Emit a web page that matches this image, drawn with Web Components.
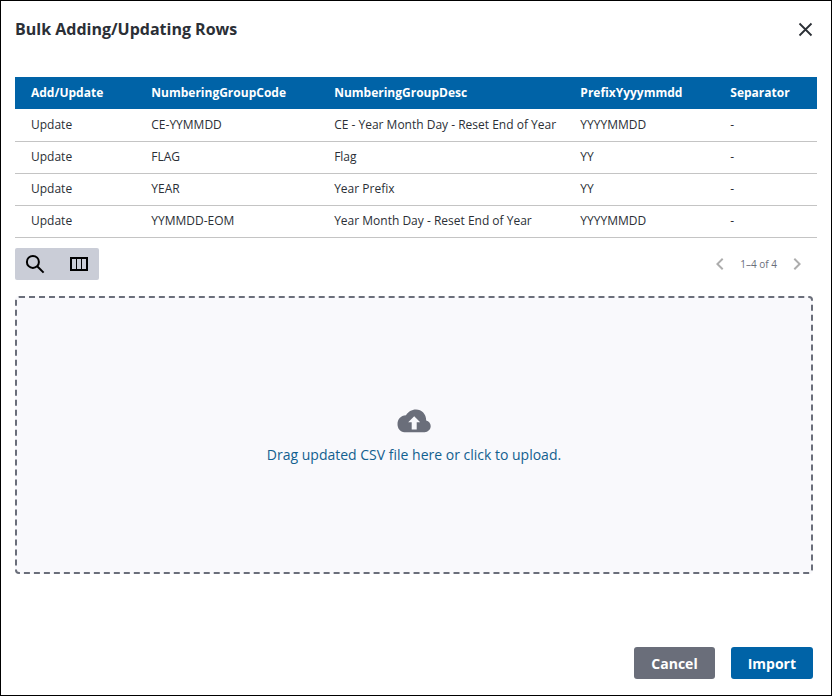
<!DOCTYPE html>
<html lang="en">
<head>
<meta charset="utf-8">
<meta name="viewport" content="width=device-width, initial-scale=1">
<title>Bulk Adding/Updating Rows</title>
<style>
  html { height: 100%; }
  body {
    margin: 0;
    min-height: 100%;
    display: flex;
    flex-direction: column;
    background: #fff;
    color: #2b2f36;
    font-family: "Open Sans", "Noto Sans", sans-serif;
    font-size: 12px;
    --brand: #0063a7;
    --slate: #6a6e7a;
  }
</style>
</head>
<body>
<bulk-dialog>
  <span slot="title">Bulk Adding/Updating Rows</span>
  <data-grid></data-grid>
  <grid-toolbar>1–4 of 4</grid-toolbar>
  <file-drop>Drag updated CSV file here or click to upload.</file-drop>
  <action-button slot="actions" kind="secondary">Cancel</action-button>
  <action-button slot="actions">Import</action-button>
</bulk-dialog>

<script>
  class BaseElement extends HTMLElement {
    constructor() {
      super();
      this.attachShadow({ mode: "open" }).innerHTML =
        "<style>*, *::before { box-sizing: border-box; } button { font: inherit; cursor: pointer; border: 0; padding: 0; margin: 0; } svg { display: block; }</style>" +
        this.render();
    }
  }

  customElements.define("bulk-dialog", class extends BaseElement {
    render() {
      return `
        <style>
          :host { display: flex; flex-direction: column; flex: 1; }
          section { flex: 1; display: flex; flex-direction: column; border: 1px solid #000; padding: 14px 14px 16px; }
          header { display: flex; align-items: center; justify-content: space-between; height: 28px; padding-right: 4px; }
          h1 { margin: 0; font-size: 16px; line-height: 24px; font-weight: 700; }
          .close { background: none; color: #2b2f36; }
          .body { flex: 1; display: flex; flex-direction: column; padding-top: 34px; }
          footer { display: flex; justify-content: flex-end; gap: 16px; padding: 16px 4px 0 0; }
        </style>
        <section role="dialog" aria-labelledby="heading">
          <header>
            <h1 id="heading"><slot name="title"></slot></h1>
            <button class="close" type="button" aria-label="Close">
              <svg width="16" height="16" viewBox="0 0 16 16" fill="none" stroke="currentColor" stroke-width="1.800"><path d="M2.500 2.500L14.500 14.500M14.500 2.500L2.500 14.500"/></svg>
            </button>
          </header>
          <div class="body"><slot></slot></div>
          <footer><slot name="actions"></slot></footer>
        </section>`;
    }
  });

  customElements.define("data-grid", class extends BaseElement {
    render() {
      const heads = ["Add/Update", "NumberingGroupCode", "NumberingGroupDesc", "PrefixYyyymmdd", "Separator"];
      const rows = [
        ["Update", "CE-YYMMDD", "CE - Year Month Day - Reset End of Year", "YYYYMMDD", "-"],
        ["Update", "FLAG", "Flag", "YY", "-"],
        ["Update", "YEAR", "Year Prefix", "YY", "-"],
        ["Update", "YYMMDD-EOM", "Year Month Day - Reset End of Year", "YYYYMMDD", "-"]
      ];
      const widths = ["15%", "22.8%", "30.7%", "18.7%", "12.8%"];
      return `
        <style>
          :host { display: block; }
          table { width: 100%; table-layout: fixed; border-collapse: collapse; }
          th, td { height: 32px; padding: 0 0 0 16px; text-align: left; white-space: nowrap; line-height: 18px; }
          th { background: var(--brand); color: #fff; font-weight: 700; }
          td { border-bottom: 1px solid #c4c4c4; }
        </style>
        <table>
          <colgroup>${widths.map(w => `<col style="width:${w}">`).join("")}</colgroup>
          <thead><tr>${heads.map(h => `<th scope="col">${h}</th>`).join("")}</tr></thead>
          <tbody>${rows.map(r => `<tr>${r.map(c => `<td>${c}</td>`).join("")}</tr>`).join("")}</tbody>
        </table>`;
    }
  });

  customElements.define("grid-toolbar", class extends BaseElement {
    render() {
      return `
        <style>
          :host { display: flex; align-items: center; justify-content: space-between; padding: 10px 8px 16px 0; }
          .tools { display: flex; border-radius: 2px; background: #cacdd7; overflow: hidden; }
          .tools button { display: grid; place-items: center; width: 40px; height: 32px; background: none; color: #000; }
          .tools { gap: 4px; }
          .pages { display: flex; align-items: center; gap: 8px; font-size: 10px; color: var(--slate); }
          .pages button { background: none; color: #adadad; }
        </style>
        <div class="tools">
          <button type="button" aria-label="Search">
            <svg width="24" height="24" viewBox="0 0 24 24" fill="none" stroke="currentColor" stroke-width="2"><circle cx="9.9" cy="9.9" r="6"/><path d="M14.200 14.200L20.600 20.600"/></svg>
          </button>
          <button type="button" aria-label="Columns">
            <svg width="24" height="24" viewBox="0 0 24 24" fill="none" stroke="currentColor"><path stroke-width="2" d="M4 6H20V18H4Z"/><path stroke-width="1" d="M9.5 7V17M14.5 7V17"/></svg>
          </button>
        </div>
        <div class="pages">
          <button type="button" aria-label="Previous page">
            <svg width="24" height="24" viewBox="0 0 24 24" fill="currentColor"><path d="M15.4 7.4L14 6l-6 6 6 6 1.4-1.4L10.8 12z"/></svg>
          </button>
          <span><slot></slot></span>
          <button type="button" aria-label="Next page">
            <svg width="24" height="24" viewBox="0 0 24 24" fill="currentColor"><path d="M10 6L8.6 7.4 13.2 12l-4.6 4.6L10 18l6-6z"/></svg>
          </button>
        </div>`;
    }
  });

  customElements.define("file-drop", class extends BaseElement {
    render() {
      return `
        <style>
          :host { display: block; margin-right: 4px; }
          label { display: flex; flex-direction: column; align-items: center; justify-content: center; gap: 10px; min-height: 278px; padding: 22px 16px 16px; border: 2px dashed var(--slate); border-radius: 4px; background: #f9f9fc; color: #12608f; font-size: 14px; line-height: 24px; text-align: center; cursor: pointer; }
          svg { color: var(--slate); }
          input { position: absolute; width: 1px; height: 1px; opacity: 0; }
        </style>
        <label for="file">
          <svg width="34" height="24" viewBox="0 0 34 24" fill="currentColor"><path fill-rule="evenodd" d="M7.4 23.2C3.4 23 .5 19.600 .5 15.200C.5 10.600 3.600 6.400 9 6.300C11 2.700 14.600 .4 19 .4C24.600 .4 29.300 5 29.200 11.400C31.800 11.900 33.700 14.200 33.700 17.100C33.700 20.500 31 23.200 27.600 23.200ZM17.200 7.200L11.200 13.200H14.700V20.500H19.700V13.200H23.200Z"/></svg>
          <span><slot></slot></span>
        </label>
        <input id="file" type="file" accept=".csv">`;
    }
  });

  customElements.define("action-button", class extends BaseElement {
    render() {
      return `
        <style>
          :host { display: block; }
          button { height: 32px; min-width: 80px; padding: 2px 17px 0; border-radius: 3px; background: var(--brand); color: #fff; font-size: 14px; font-weight: 700; line-height: 24px; }
          :host([kind="secondary"]) button { background: var(--slate); }
        </style>
        <button type="button"><slot></slot></button>`;
    }
  });
</script>
</body>
</html>
